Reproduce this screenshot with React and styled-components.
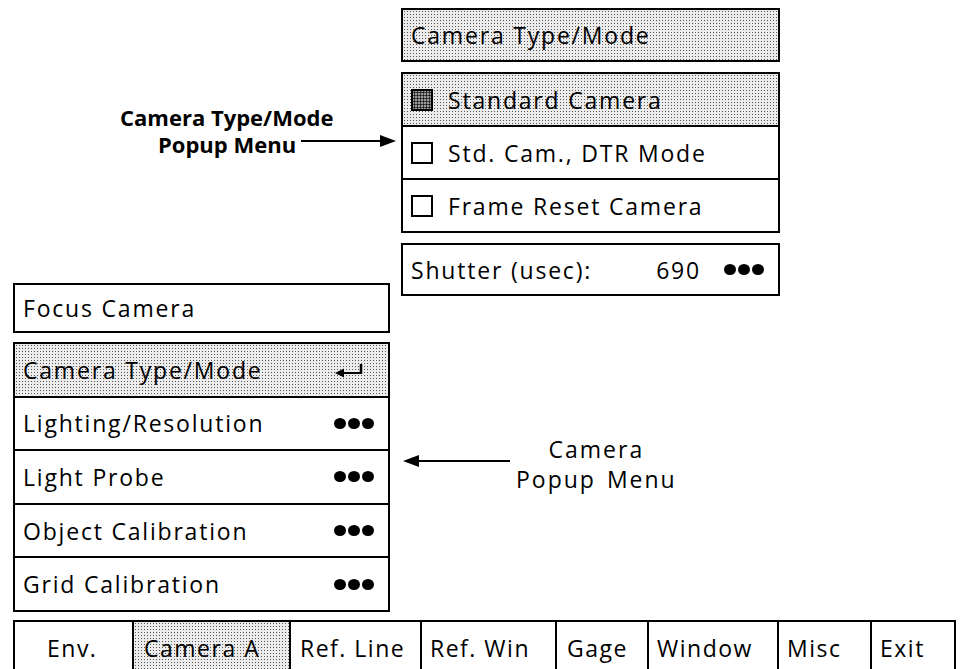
import React from "react";
import styled, { createGlobalStyle, css } from "styled-components";

const GlobalStyle = createGlobalStyle`
  html, body {
    margin: 0;
    padding: 0;
    background: #fff;
    overflow: hidden;
  }
  body {
    font-family: "Open Sans", "Liberation Sans", sans-serif;
    color: #000;
  }
`;

// light dither used for highlighted rows / tabs
const shaded = css`
  background-color: #ececec;
  background-image: radial-gradient(circle, #555 0.7px, transparent 1px);
  background-size: 3px 3px;
`;

const Page = styled.div`
  width: 961px;
  height: 669px;
  padding-top: 8px;
  box-sizing: border-box;
`;

const Columns = styled.div`
  display: flex;
  gap: 11px;
  padding-left: 13px;
`;

const LeftCol = styled.div`
  width: 377px;
  display: flex;
  flex-direction: column;
`;

const RightCol = styled.div`
  width: 379px;
  display: flex;
  flex-direction: column;
  gap: 10px;
`;

const Box = styled.div`
  border: 2px solid #000;
  box-sizing: border-box;
  height: ${(p) => p.$h}px;
  margin-top: ${(p) => p.$mt || 0}px;
  display: flex;
  flex-direction: column;
`;

const Row = styled.div`
  flex: 1;
  display: flex;
  align-items: center;
  gap: 15px;
  padding: 0 14px 0 8px;
  font-size: 23px;
  letter-spacing: 1.8px;
  white-space: nowrap;
  & + & {
    border-top: 2px solid #000;
  }
  ${(p) => p.$shaded && shaded}
`;

const Label = styled.span`
  flex: 1;
`;

const Value = styled.span`
  margin-right: 8px;
`;

const Check = styled.span`
  width: 18px;
  height: 18px;
  border: 2px solid #000;
  flex: none;
  background: #fff;
  ${(p) =>
    p.$on &&
    css`
      background-color: #9a9a9a;
      background-image: radial-gradient(circle, #111 0.9px, transparent 1.2px);
      background-size: 3px 3px;
    `}
`;

const Dots = styled.span`
  display: flex;
  gap: 2px;
  & > i {
    width: 12px;
    height: 11px;
    border-radius: 50%;
    background: #000;
  }
`;

const More = () => (
  <Dots>
    <i />
    <i />
    <i />
  </Dots>
);

const IconSlot = styled.span`
  display: flex;
  margin-right: 10px;
`;

const ReturnIcon = () => (
  <IconSlot>
    <svg width="30" height="16" viewBox="0 0 30 16">
      <polygon points="1,11 10,6.5 10,15.5" fill="#000" />
      <line x1="8" y1="11" x2="27" y2="11" stroke="#000" strokeWidth="2" />
      <line x1="27" y1="2" x2="27" y2="12" stroke="#000" strokeWidth="2.5" />
    </svg>
  </IconSlot>
);

const Arrow = ({ dir, width }) => (
  <svg width={width} height="14" viewBox={`0 0 ${width} 14`} style={{ flex: "none" }}>
    {dir === "right" ? (
      <>
        <line x1="0" y1="7" x2={width - 14} y2="7" stroke="#000" strokeWidth="2" />
        <polygon points={`${width - 16},1 ${width},7 ${width - 16},13`} fill="#000" />
      </>
    ) : (
      <>
        <line x1="14" y1="7" x2={width} y2="7" stroke="#000" strokeWidth="2" />
        <polygon points={`0,7 16,1 16,13`} fill="#000" />
      </>
    )}
  </svg>
);

// bold callout on the left: two centred lines, arrow trails the second one
const TypeCallout = styled.div`
  margin-top: 96px;
  font-size: 22px;
  font-weight: 700;
  line-height: 27px;
  white-space: nowrap;
`;

const CalloutLine = styled.div`
  display: flex;
  align-items: center;
  gap: ${(p) => p.$gap || 0}px;
  margin-left: ${(p) => p.$ml}px;
  & > svg {
    margin-bottom: 8px;
  }
`;

const CameraCallout = styled.div`
  display: flex;
  align-items: center;
  margin: 128px 0 0 2px;
  & > svg {
    margin-top: -6px;
  }
`;

const CalloutText = styled.div`
  margin-left: 6px;
  text-align: center;
  font-size: 23px;
  line-height: 30px;
  letter-spacing: 2px;
  word-spacing: 3px;
  white-space: nowrap;
`;

const TabBar = styled.div`
  display: flex;
  margin: 8px 0 0 13px;
  width: 943px;
  height: 56px;
  border: 2px solid #000;
  box-sizing: border-box;
`;

const Tab = styled.div`
  width: ${(p) => p.$w}px;
  flex: none;
  box-sizing: border-box;
  padding-top: 10px;
  padding-left: ${(p) => p.$pl}px;
  font-size: 23px;
  letter-spacing: 1.5px;
  white-space: nowrap;
  & + & {
    border-left: 2px solid #000;
  }
  ${(p) => p.$shaded && shaded}
`;

const tabs = [
  { label: "Env.", w: 117, pl: 32 },
  { label: "Camera A", w: 157, pl: 10 },
  { label: "Ref. Line", w: 131, pl: 9 },
  { label: "Ref. Win", w: 135, pl: 8 },
  { label: "Gage", w: 92, pl: 10 },
  { label: "Window", w: 130, pl: 8 },
  { label: "Misc", w: 93, pl: 8 },
  { label: "Exit", w: 88, pl: 8 },
];

const cameraItems = [
  "Lighting/Resolution",
  "Light Probe",
  "Object Calibration",
  "Grid Calibration",
];

export default function App() {
  return (
    <Page>
      <GlobalStyle />
      <Columns>
        <LeftCol>
          <TypeCallout>
            <CalloutLine $ml={107}>Camera Type/Mode</CalloutLine>
            <CalloutLine $ml={145} $gap={5}>
              Popup Menu
              <Arrow dir="right" width={95} />
            </CalloutLine>
          </TypeCallout>
          <Box $h={50} $mt={125}>
            <Row>Focus Camera</Row>
          </Box>
          <Box $h={270} $mt={9}>
            <Row $shaded>
              <Label>Camera Type/Mode</Label>
              <ReturnIcon />
            </Row>
            {cameraItems.map((item) => (
              <Row key={item}>
                <Label>{item}</Label>
                <More />
              </Row>
            ))}
          </Box>
        </LeftCol>
        <RightCol>
          <Box $h={54}>
            <Row $shaded>Camera Type/Mode</Row>
          </Box>
          <Box $h={161}>
            <Row $shaded>
              <Check $on />
              Standard Camera
            </Row>
            <Row>
              <Check />
              Std. Cam., DTR Mode
            </Row>
            <Row>
              <Check />
              Frame Reset Camera
            </Row>
          </Box>
          <Box $h={53}>
            <Row>
              <Label>Shutter (usec):</Label>
              <Value>690</Value>
              <More />
            </Row>
          </Box>
          <CameraCallout>
            <Arrow dir="left" width={107} />
            <CalloutText>
              <div>Camera</div>
              <div>Popup Menu</div>
            </CalloutText>
          </CameraCallout>
        </RightCol>
      </Columns>
      <TabBar>
        {tabs.map((t) => (
          <Tab key={t.label} $w={t.w} $pl={t.pl} $shaded={t.label === "Camera A"}>
            {t.label}
          </Tab>
        ))}
      </TabBar>
    </Page>
  );
}
